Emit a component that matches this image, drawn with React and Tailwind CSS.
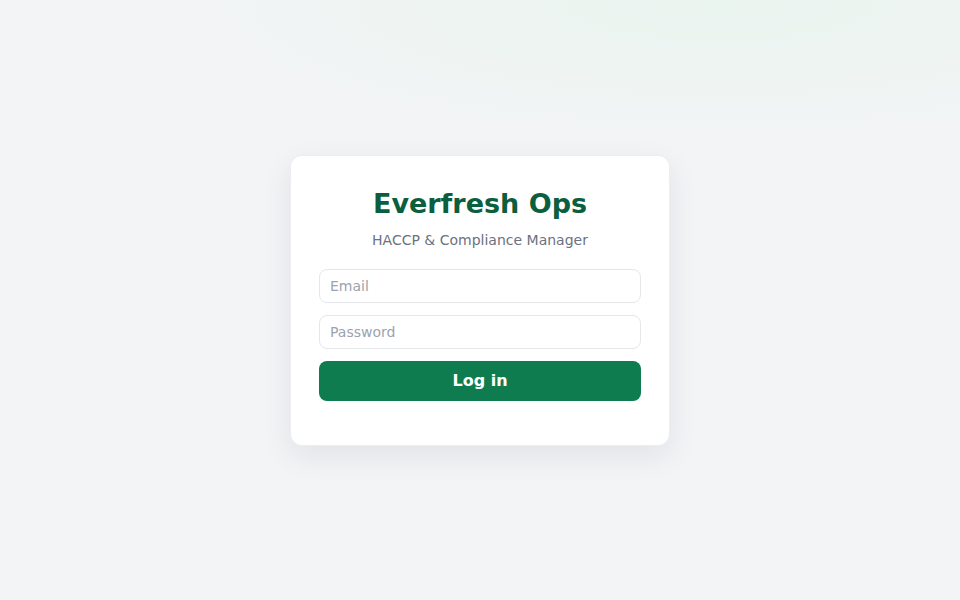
import React, { useState } from 'react';

export default function App() {
    const [email, setEmail] = useState('');
    const [password, setPassword] = useState('');

    return (
        <div
            className="min-h-screen w-full flex items-center justify-center bg-[#f3f4f6] bg-[radial-gradient(ellipse_60%_25%_at_75%_0%,_#eaf4ef_0%,_#f3f4f6_100%)]"
            style={{ fontFamily: '"DejaVu Sans", sans-serif' }}
        >
            <div className="w-[380px] bg-white rounded-xl border border-[#eceef1] shadow-[0_10px_30px_rgba(15,23,42,0.08)] px-7 pt-[31px] pb-11">
                <h1 className="text-center text-[27px] leading-[34px] font-bold text-[#0b5e3e]">Everfresh Ops</h1>
                <p className="mt-[9px] text-center text-sm leading-5 text-[#6b7280]">HACCP &amp; Compliance Manager</p>
                <form className="mt-[19px] flex flex-col gap-3" onSubmit={(e) => e.preventDefault()}>
                    <input
                        type="email"
                        placeholder="Email"
                        value={email}
                        onChange={(e) => setEmail(e.target.value)}
                        className="h-[34px] w-full rounded-lg border border-[#e5e7eb] px-[10px] text-sm text-gray-800 placeholder:text-[#9ca3af] outline-none"
                    />
                    <input
                        type="password"
                        placeholder="Password"
                        value={password}
                        onChange={(e) => setPassword(e.target.value)}
                        className="h-[34px] w-full rounded-lg border border-[#e5e7eb] px-[10px] text-sm text-gray-800 placeholder:text-[#9ca3af] outline-none"
                    />
                    <button
                        type="submit"
                        className="h-10 w-full rounded-lg bg-[#0e7c4f] text-white text-base font-bold"
                    >
                        Log in
                    </button>
                </form>
            </div>
        </div>
    );
}
